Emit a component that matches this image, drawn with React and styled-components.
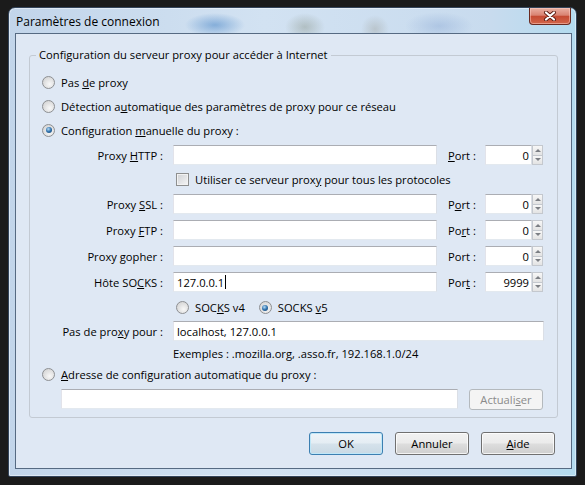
import React from "react";
import styled, { createGlobalStyle, css } from "styled-components";

const GlobalStyle = createGlobalStyle`
  html, body {
    margin: 0;
    padding: 0;
    background: #1b1b1b;
  }
  body {
    font-family: "Open Sans", "Noto Sans", sans-serif;
    font-size: 11.2px;
    color: #000;
  }
`;

const App = () => {
  return (
    <Screen>
      <GlobalStyle />
      <Window>
        {/* title bar */}
        <TitleBar>
          <Title>Paramètres de connexion</Title>
          <CloseButton>
            <svg width="14" height="10" viewBox="0 0 14 10">
              <path d="M3 1.5 L11 8.5 M11 1.5 L3 8.5" stroke="#5b1c12" strokeWidth="4" strokeLinecap="round" />
              <path d="M3 1.5 L11 8.5 M11 1.5 L3 8.5" stroke="#ffffff" strokeWidth="2.2" strokeLinecap="round" />
            </svg>
          </CloseButton>
        </TitleBar>

        <Client>
          <GroupBox>
            <Legend>Configuration du serveur proxy pour accéder à Internet</Legend>

            <RadioRow>
              <Radio />
              <span>Pas <u>d</u>e proxy</span>
            </RadioRow>
            <RadioRow>
              <Radio />
              <span>Détection a<u>u</u>tomatique des paramètres de proxy pour ce réseau</span>
            </RadioRow>
            <RadioRow>
              <Radio $checked />
              <span>Configuration <u>m</u>anuelle du proxy :</span>
            </RadioRow>

            {/* manual settings */}
            <FieldRow>
              <FieldLabel>Proxy <u>H</u>TTP :</FieldLabel>
              <TextBox $w={264} />
              <PortLabel><u>P</u>ort :</PortLabel>
              <PortField value="0" />
            </FieldRow>
            <CheckRow>
              <Checkbox />
              <span>Utiliser ce serveur prox<u>y</u> pour tous les protocoles</span>
            </CheckRow>
            <FieldRow>
              <FieldLabel>Proxy <u>S</u>SL :</FieldLabel>
              <TextBox $w={264} />
              <PortLabel>P<u>o</u>rt :</PortLabel>
              <PortField value="0" />
            </FieldRow>
            <FieldRow>
              <FieldLabel>Proxy <u>F</u>TP :</FieldLabel>
              <TextBox $w={264} />
              <PortLabel>Po<u>r</u>t :</PortLabel>
              <PortField value="0" />
            </FieldRow>
            <FieldRow>
              <FieldLabel>Proxy <u>g</u>opher :</FieldLabel>
              <TextBox $w={264} />
              <PortLabel>Port :</PortLabel>
              <PortField value="0" />
            </FieldRow>
            <FieldRow>
              <FieldLabel>Hôte SO<u>C</u>KS :</FieldLabel>
              <TextBox $w={264}>
                127.0.0.1<Caret />
              </TextBox>
              <PortLabel>Por<u>t</u> :</PortLabel>
              <PortField value="9999" />
            </FieldRow>

            <SocksRow>
              <RadioOption>
                <Radio />
                <span>SOC<u>K</u>S v4</span>
              </RadioOption>
              <RadioOption>
                <Radio $checked />
                <span>SOCKS <u>v</u>5</span>
              </RadioOption>
            </SocksRow>

            <FieldRow $h={22}>
              <FieldLabel>Pas de pro<u>x</u>y pour :</FieldLabel>
              <TextBox $w={371}>localhost, 127.0.0.1</TextBox>
            </FieldRow>
            <Hint>Exemples : .mozilla.org, .asso.fr, 192.168.1.0/24</Hint>

            <RadioRow $h={20}>
              <Radio />
              <span><u>A</u>dresse de configuration automatique du proxy :</span>
            </RadioRow>
            <AutoRow>
              <TextBox $w={397} />
              <Button disabled $w={74} $h={21}>
                Actuali<u>s</u>er
              </Button>
            </AutoRow>
          </GroupBox>

          <ButtonRow>
            <Button $default>OK</Button>
            <Button>Annuler</Button>
            <Button>
              <u>A</u>ide
            </Button>
          </ButtonRow>
        </Client>
      </Window>
    </Screen>
  );
};

const PortField = ({ value }) => (
  <PortBox>
    <PortValue>{value}</PortValue>
    <Spinner>
      <SpinBtn />
      <SpinBtn $down />
    </Spinner>
  </PortBox>
);

// window
const Screen = styled.div`
  width: 585px;
  height: 485px;
  box-sizing: border-box;
  padding: 7px 0 0 8px;
  overflow: hidden;
`;

const Window = styled.div`
  width: 569px;
  height: 470px;
  box-sizing: border-box;
  display: flex;
  flex-direction: column;
  border: 1px solid #33445a;
  border-radius: 7px 7px 2px 2px;
  box-shadow: inset 0 0 0 1px rgba(255, 255, 255, 0.45);
  background: radial-gradient(ellipse 30px 12px at 206px 17px, rgba(60, 125, 195, 0.5), transparent),
    radial-gradient(ellipse 20px 14px at 296px 19px, rgba(130, 140, 125, 0.4), transparent),
    radial-gradient(ellipse 14px 14px at 366px 21px, rgba(150, 150, 140, 0.35), transparent),
    radial-gradient(ellipse 34px 14px at 430px 18px, rgba(110, 145, 200, 0.3), transparent),
    linear-gradient(to right, #c2d5ea, #d2e2f2 45%, #c8dbee 85%, #b3dbef);
`;

const TitleBar = styled.div`
  height: 25px;
  flex: none;
  display: flex;
  justify-content: space-between;
  align-items: flex-start;
  padding: 0 5px 0 7px;
`;

const Title = styled.div`
  margin-top: 5px;
  font-size: 12px;
  color: #000;
`;

const CloseButton = styled.div`
  width: 42px;
  height: 17px;
  box-sizing: border-box;
  border: 1px solid #6a2a20;
  border-top: none;
  border-radius: 0 0 4px 4px;
  background: linear-gradient(#eab0a2 0%, #d98372 45%, #c54b33 52%, #d2664a 100%);
  box-shadow: inset 0 0 0 1px rgba(255, 210, 200, 0.5);
  display: flex;
  align-items: center;
  justify-content: center;
`;

const Client = styled.div`
  flex: 1;
  margin: 0 4px 7px 6px;
  border: 1px solid #566a82;
  background: #dfe8f4;
  padding: 13px 13px 13px 13px;
  display: flex;
  flex-direction: column;
`;

// group box
const GroupBox = styled.fieldset`
  margin: 0;
  min-width: 0;
  padding: 7px 12px 8px 12px;
  border: 1px solid #c3cad3;
  border-radius: 3px;
`;

const Legend = styled.legend`
  margin-left: -6px;
  padding: 0 3px;
  line-height: 16px;
`;

const RadioRow = styled.label`
  display: flex;
  align-items: center;
  gap: 6px;
  height: ${(p) => p.$h || 24}px;
`;

const Radio = styled.span`
  position: relative;
  flex: none;
  width: 13px;
  height: 13px;
  box-sizing: border-box;
  border-radius: 50%;
  border: 1px solid #8d8f92;
  background: radial-gradient(circle at 60% 65%, #f8f8f8 0%, #e4e4e4 45%, #cdcdcd 100%);
  ${(p) =>
    p.$checked &&
    css`
      &::after {
        content: "";
        position: absolute;
        left: 2.5px;
        top: 2.5px;
        width: 6px;
        height: 6px;
        border-radius: 50%;
        background: radial-gradient(circle at 40% 35%, #b5dcf7 0%, #2e70ab 50%, #173f69 100%);
      }
    `}
`;

const FieldRow = styled.div`
  display: flex;
  align-items: center;
  height: ${(p) => p.$h || 26}px;
  margin-left: 18px;
`;

const FieldLabel = styled.span`
  flex: none;
  width: 103px;
  margin-right: 10px;
  text-align: right;
  white-space: nowrap;
`;

const TextBox = styled.div`
  flex: none;
  width: ${(p) => p.$w}px;
  height: 20px;
  box-sizing: border-box;
  padding: 0 3px;
  display: flex;
  align-items: center;
  background: #ffffff;
  border: 1px solid;
  border-color: #abadb3 #dbdfe6 #e3e9ef #e2e3ea;
  color: #000;
  white-space: nowrap;
`;

const Caret = styled.span`
  display: inline-block;
  width: 1px;
  height: 14px;
  margin-left: 1px;
  background: #000;
`;

const PortLabel = styled.span`
  flex: none;
  width: 37px;
  margin-left: 11px;
  white-space: nowrap;
`;

const PortBox = styled.div`
  flex: none;
  display: flex;
  height: 20px;
`;

const PortValue = styled(TextBox)`
  width: 47px;
  justify-content: flex-end;
  padding-right: 2px;
`;

const Spinner = styled.div`
  width: 11px;
  display: flex;
  flex-direction: column;
`;

const SpinBtn = styled.div`
  flex: 1;
  box-sizing: border-box;
  border: 1px solid #c4c8ce;
  ${(p) => p.$down && "border-top: none;"}
  background: linear-gradient(#f7f7f7, #e3e3e3);
  display: flex;
  align-items: center;
  justify-content: center;
  &::before {
    content: "";
    border-left: 3px solid transparent;
    border-right: 3px solid transparent;
    border-${(p) => (p.$down ? "top" : "bottom")}: 3px solid #7c7f84;
  }
`;

const CheckRow = styled.label`
  display: flex;
  align-items: center;
  gap: 6px;
  height: 23px;
  margin-left: 134px;
`;

const Checkbox = styled.span`
  flex: none;
  width: 13px;
  height: 13px;
  box-sizing: border-box;
  border: 1px solid #8e8f8f;
  background: linear-gradient(135deg, #cfd1d4, #f5f5f5);
  box-shadow: inset 0 0 0 1px #f2f2f2;
`;

const SocksRow = styled.div`
  display: flex;
  align-items: center;
  gap: 14px;
  height: 25px;
  margin-left: 134px;
`;

const RadioOption = styled.label`
  display: flex;
  align-items: center;
  gap: 6px;
`;

const Hint = styled.div`
  height: 22px;
  display: flex;
  align-items: center;
  padding-left: 131px;
`;

const AutoRow = styled.div`
  display: flex;
  align-items: center;
  gap: 11px;
  margin: 5px 0 0 19px;
  height: 20px;
`;

// buttons
const Button = styled.button`
  flex: none;
  width: ${(p) => p.$w || 74}px;
  height: ${(p) => p.$h || 23}px;
  padding: 0;
  font-family: inherit;
  font-size: 11.2px;
  color: #000;
  border: 1px solid #707070;
  border-radius: 3px;
  background: linear-gradient(#f2f2f2 0%, #ebebeb 48%, #dddddd 52%, #cfcfcf 100%);
  box-shadow: inset 0 0 0 1px rgba(255, 255, 255, 0.75);
  ${(p) =>
    p.$default &&
    css`
      border-color: #3c7fb1;
      box-shadow: inset 0 0 0 1px #bfe7f8;
      background: linear-gradient(#eef4f8 0%, #e4edf3 48%, #d5e2eb 52%, #c9d9e4 100%);
    `}
  &:disabled {
    color: #8a8a8a;
    border-color: #b4b9bd;
    background: #f4f4f4;
    box-shadow: none;
  }
`;

const ButtonRow = styled.div`
  display: flex;
  justify-content: flex-end;
  gap: 12px;
  margin-top: auto;
  padding-right: 3px;
`;

export default App;
